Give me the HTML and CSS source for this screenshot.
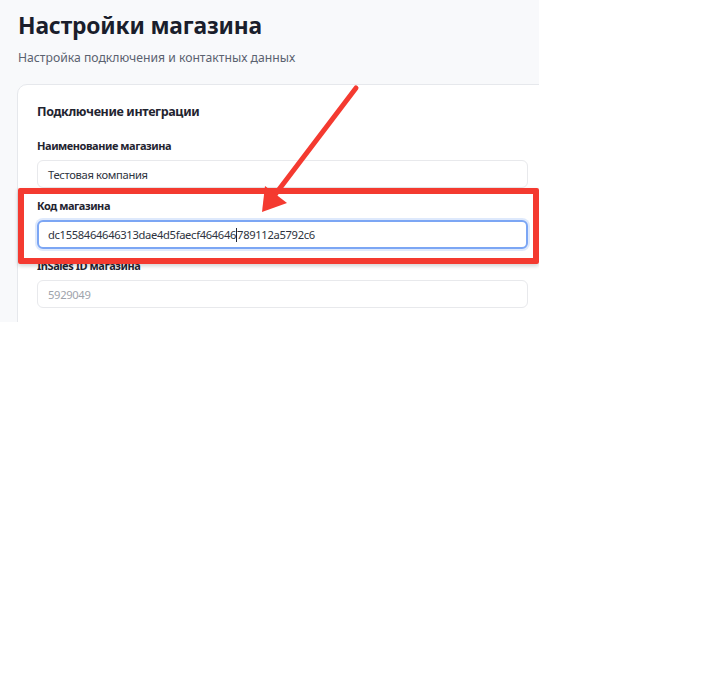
FILE: index.html
```html
<!DOCTYPE html>
<html lang="ru">
<head>
  <meta charset="UTF-8" />
  <meta name="viewport" content="width=device-width, initial-scale=1.0" />
  <title>Настройки магазина</title>
  <link rel="stylesheet" href="styles.css">
</head>
<body>
  <div class="shot">
    <div class="page-head">
      <h1>Настройки магазина</h1>
      <p>Настройка подключения и контактных данных</p>
    </div>

    <div class="card">
      <h2>Подключение интеграции</h2>

      <div class="field">
        <label>Наименование магазина</label>
        <div class="input">Тестовая компания</div>
      </div>

      <div class="field active">
        <label>Код магазина</label>
        <div class="input focused">dc1558464646313dae4d5faecf464646<span class="caret"></span>789112a5792c6</div>
      </div>

      <div class="field">
        <label>InSales ID магазина</label>
        <div class="input placeholder">5929049</div>
      </div>
    </div>

    <!-- annotation on top of the screenshot -->
    <div class="mark-box"></div>
    <svg class="mark-arrow" width="539" height="322" viewBox="0 0 539 322">
      <line x1="356" y1="88" x2="274" y2="196" stroke="#f43a30" stroke-width="5" stroke-linecap="round" />
      <polygon points="262,212 265,186 287,203" fill="#f43a30" />
    </svg>
  </div>
</body>
</html>
```

FILE: styles.css
```css
body {
  margin: 0;
  background-color: #ffffff;
  font-family: 'Noto Sans', 'Open Sans', sans-serif;
  color: #1f2430;
}
.shot {
  position: relative;
  width: 539px;
  height: 322px;
  overflow: hidden;
  background-color: #f8f9fb;
}
.page-head {
  padding: 9px 18px 0 18px;
}
h1 {
  margin: 0;
  font-size: 22.8px;
  line-height: 34px;
  font-weight: 700;
  letter-spacing: -0.15px;
  color: #1a1e2c;
}
.page-head p {
  margin: 6px 0 0 0;
  font-size: 12.2px;
  line-height: 18px;
  color: #5b6270;
}
.card {
  margin: 17px 0 0 17px;
  width: 560px;
  height: 260px;
  box-sizing: border-box;
  padding: 17px 19px 16px 19px;
  background-color: #ffffff;
  border: 1px solid #e6e8ec;
  border-radius: 10px;
}
h2 {
  margin: 0 0 16px 0;
  font-size: 12.5px;
  line-height: 20px;
  font-weight: 700;
  letter-spacing: -0.35px;
  color: #1f2430;
}
.field {
  margin-bottom: 10px;
}
.field.active {
  margin-bottom: 9px;
}
label {
  display: block;
  margin-bottom: 6px;
  font-size: 11px;
  line-height: 16px;
  font-weight: 700;
  letter-spacing: -0.45px;
  color: #1f2430;
}
.input {
  width: 491px;
  height: 28px;
  box-sizing: border-box;
  padding: 0 10px;
  display: flex;
  align-items: center;
  border: 1px solid #e8e9ec;
  border-radius: 6px;
  background-color: #ffffff;
  font-size: 11.2px;
  letter-spacing: -0.33px;
  color: #2e3340;
  white-space: nowrap;
}
.input.focused {
  height: 29px;
  border: 2px solid #7ca6f4;
  padding: 0 9px;
  box-shadow: 0 0 0 2px rgba(124, 166, 244, 0.25);
}
.input.placeholder {
  color: #9ea3ab;
}
.caret {
  display: inline-block;
  width: 1px;
  height: 14px;
  background-color: #1f2430;
}
.mark-box {
  position: absolute;
  left: 18px;
  top: 188px;
  width: 521px;
  height: 76px;
  box-sizing: border-box;
  border: 6px solid #f43a30;
  border-radius: 2px;
  box-shadow: 0 2px 4px rgba(0, 0, 0, 0.18);
}
.mark-arrow {
  position: absolute;
  left: 0;
  top: 0;
}
```
